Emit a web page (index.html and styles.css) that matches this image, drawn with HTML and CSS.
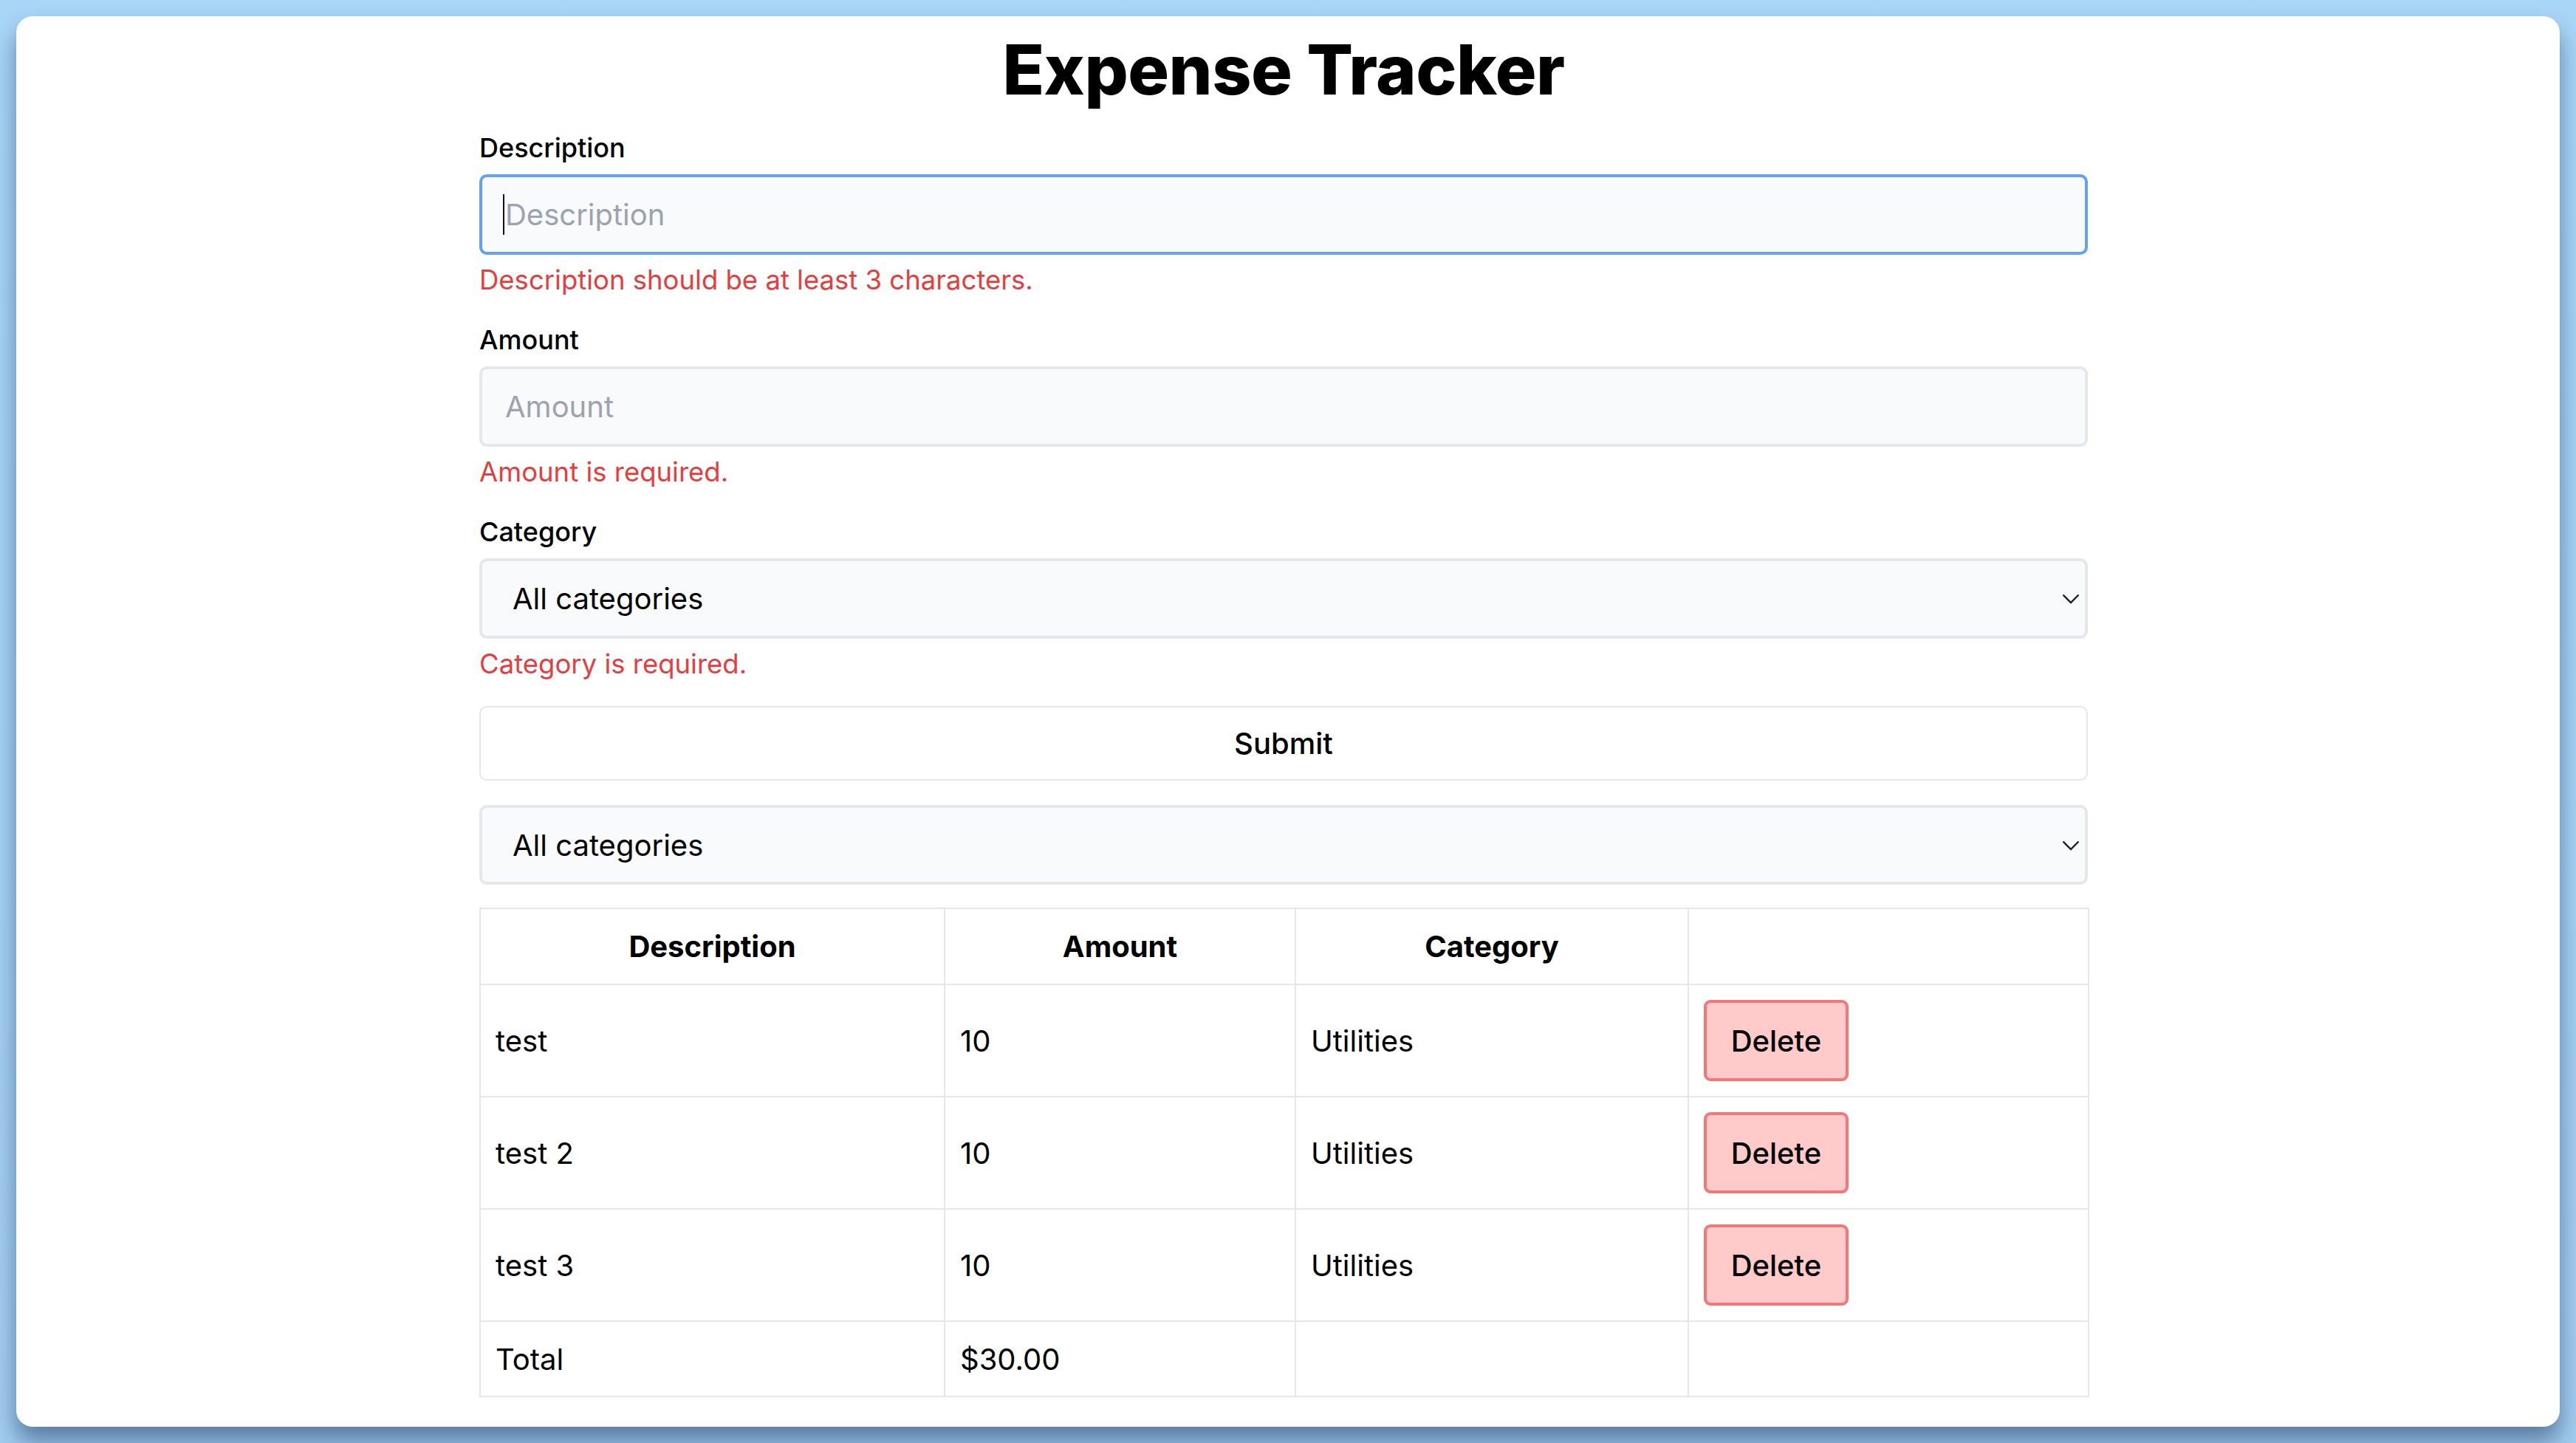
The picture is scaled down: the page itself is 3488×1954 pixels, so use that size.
FILE: index.html
```html
<!DOCTYPE html>
<html lang="en">
<head>
<meta charset="utf-8">
<title>Expense Tracker</title>
<link rel="stylesheet" href="styles.css">
</head>
<body>
<div class="card">
  <div class="content">
    <h1 class="title">Expense Tracker</h1>
    <form class="form">
      <div class="field">
        <label class="label" for="description">Description</label>
        <div class="control">
          <input id="description" class="input input-focused" type="text" placeholder="Description">
          <span class="caret"></span>
        </div>
        <p class="error">Description should be at least 3 characters.</p>
      </div>
      <div class="field">
        <label class="label" for="amount">Amount</label>
        <div class="control">
          <input id="amount" class="input" type="text" placeholder="Amount">
        </div>
        <p class="error">Amount is required.</p>
      </div>
      <div class="field field-last">
        <label class="label" for="category">Category</label>
        <div class="control">
          <select id="category" class="select">
            <option>All categories</option>
          </select>
          <svg class="chevron" width="24" height="14" viewBox="0 0 24 14"><polyline points="1.5,1.5 12,12 22.5,1.5" fill="none" stroke="#1f1f1f" stroke-width="2.4"/></svg>
        </div>
        <p class="error">Category is required.</p>
      </div>
      <button type="button" class="submit">Submit</button>
    </form>
    <div class="control filter">
      <select class="select">
        <option>All categories</option>
      </select>
      <svg class="chevron" width="24" height="14" viewBox="0 0 24 14"><polyline points="1.5,1.5 12,12 22.5,1.5" fill="none" stroke="#1f1f1f" stroke-width="2.4"/></svg>
    </div>
    <table class="table">
      <colgroup>
        <col class="col-desc">
        <col class="col-amount">
        <col class="col-cat">
        <col class="col-act">
      </colgroup>
      <thead>
        <tr class="head-row">
          <th>Description</th>
          <th>Amount</th>
          <th>Category</th>
          <th></th>
        </tr>
      </thead>
      <tbody>
        <tr class="body-row">
          <td>test</td>
          <td>10</td>
          <td>Utilities</td>
          <td><button type="button" class="delete">Delete</button></td>
        </tr>
        <tr class="body-row">
          <td>test 2</td>
          <td>10</td>
          <td>Utilities</td>
          <td><button type="button" class="delete">Delete</button></td>
        </tr>
        <tr class="body-row">
          <td>test 3</td>
          <td>10</td>
          <td>Utilities</td>
          <td><button type="button" class="delete">Delete</button></td>
        </tr>
      </tbody>
      <tfoot>
        <tr class="total-row">
          <td>Total</td>
          <td>$30.00</td>
          <td></td>
          <td></td>
        </tr>
      </tfoot>
    </table>
  </div>
</div>
</body>
</html>
```

FILE: styles.css
```css
* {
  box-sizing: border-box;
}

html,
body {
  margin: 0;
  height: 100%;
}

body {
  background: linear-gradient(180deg, #a9d5f7 0%, #a6d1f4 60%, #a2ccf0 100%);
  font-family: Inter, "Noto Sans", sans-serif;
  color: #000;
  overflow: hidden;
}

.card {
  margin: 22px;
  height: 1910px;
  background: #fff;
  border-radius: 22px;
  box-shadow: 0 20px 30px rgba(20, 50, 90, 0.5);
  padding: 16px 639px 0 627px;
  overflow: hidden;
}

.title {
  margin: 0 0 23px;
  font-size: 93px;
  line-height: 112px;
  font-weight: 800;
  text-align: center;
  letter-spacing: -0.5px;
}

.form {
  margin: 0;
}

.field {
  margin-bottom: 27px;
}

.field-last {
  margin-bottom: 30px;
}

.label {
  display: block;
  font-size: 36px;
  line-height: 54px;
  font-weight: 500;
  margin-bottom: 9px;
}

.control {
  position: relative;
}

.input,
.select {
  display: block;
  width: 100%;
  height: 109px;
  border: 4px solid #e5e7eb;
  border-radius: 10px;
  background: #f9fafb;
  font-family: inherit;
  font-size: 40px;
  color: #000;
  padding: 0 31px;
  outline: none;
  margin: 0;
}

.input::placeholder {
  color: #9ca3af;
}

.input-focused {
  border-color: #63a2f2;
}

.caret {
  position: absolute;
  left: 32px;
  top: 27px;
  width: 2px;
  height: 55px;
  background: #111;
}

.select {
  appearance: none;
  -webkit-appearance: none;
  padding-left: 41px;
}

.chevron {
  position: absolute;
  right: 11px;
  top: 48px;
  pointer-events: none;
}

.error {
  margin: 7px 0 0;
  font-size: 36.5px;
  line-height: 54px;
  color: #e53e3e;
}

.submit {
  display: block;
  width: 100%;
  height: 101px;
  margin: 0 0 33px;
  background: #fff;
  border: 2px solid #e5e7eb;
  border-radius: 10px;
  font-family: inherit;
  font-size: 40px;
  font-weight: 500;
  color: #000;
}

.filter {
  margin-bottom: 31px;
}

.filter .select {
  height: 108px;
}

.table {
  width: 100%;
  table-layout: fixed;
  border-collapse: collapse;
  border: 2px solid #e5e7eb;
  font-size: 40px;
}

.col-desc {
  width: 629px;
}

.col-amount {
  width: 475px;
}

.col-cat {
  width: 532px;
}

.col-act {
  width: 542px;
}

.table th,
.table td {
  border: 2px solid #e5e7eb;
  padding: 0 20px;
  vertical-align: middle;
}

.table th {
  font-weight: 700;
  text-align: center;
  height: 103px;
}

.table td {
  text-align: left;
  font-weight: 400;
}

.body-row td {
  height: 152px;
}

.total-row td {
  height: 102px;
}

.delete {
  display: block;
  width: 196px;
  height: 110px;
  padding: 0;
  background: #fecaca;
  border: 4px solid #f47777;
  border-radius: 9px;
  font-family: inherit;
  font-size: 40px;
  font-weight: 500;
  color: #000;
}
```
